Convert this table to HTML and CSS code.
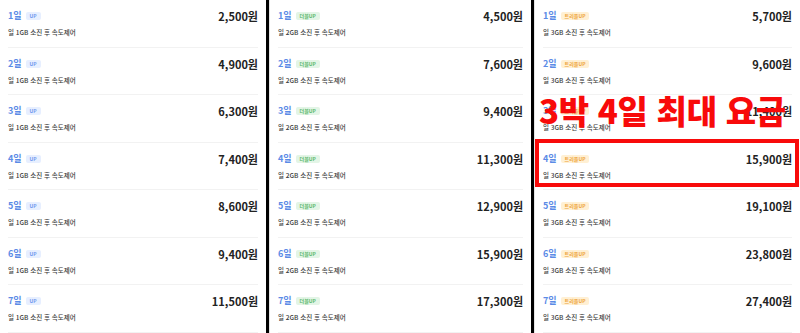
FILE: index.html
```html
<!DOCTYPE html>
<html lang="ko">
<head>
<meta charset="utf-8">
<title>요금표</title>
<link rel="stylesheet" href="styles.css">
</head>
<body>
<div class="page">
  <div class="col col-a">
    <div class="row"><div class="info"><div class="head"><span class="day">1일</span><span class="badge up">UP</span></div><div class="desc">일 1GB 소진 후 속도제어</div></div><div class="price">2,500원</div></div>
    <div class="row"><div class="info"><div class="head"><span class="day">2일</span><span class="badge up">UP</span></div><div class="desc">일 1GB 소진 후 속도제어</div></div><div class="price">4,900원</div></div>
    <div class="row"><div class="info"><div class="head"><span class="day">3일</span><span class="badge up">UP</span></div><div class="desc">일 1GB 소진 후 속도제어</div></div><div class="price">6,300원</div></div>
    <div class="row"><div class="info"><div class="head"><span class="day">4일</span><span class="badge up">UP</span></div><div class="desc">일 1GB 소진 후 속도제어</div></div><div class="price">7,400원</div></div>
    <div class="row"><div class="info"><div class="head"><span class="day">5일</span><span class="badge up">UP</span></div><div class="desc">일 1GB 소진 후 속도제어</div></div><div class="price">8,600원</div></div>
    <div class="row"><div class="info"><div class="head"><span class="day">6일</span><span class="badge up">UP</span></div><div class="desc">일 1GB 소진 후 속도제어</div></div><div class="price">9,400원</div></div>
    <div class="row"><div class="info"><div class="head"><span class="day">7일</span><span class="badge up">UP</span></div><div class="desc">일 1GB 소진 후 속도제어</div></div><div class="price">11,500원</div></div>
  </div>
  <div class="sep"></div>
  <div class="col col-b">
    <div class="row"><div class="info"><div class="head"><span class="day">1일</span><span class="badge dbl">더블UP</span></div><div class="desc">일 2GB 소진 후 속도제어</div></div><div class="price">4,500원</div></div>
    <div class="row"><div class="info"><div class="head"><span class="day">2일</span><span class="badge dbl">더블UP</span></div><div class="desc">일 2GB 소진 후 속도제어</div></div><div class="price">7,600원</div></div>
    <div class="row"><div class="info"><div class="head"><span class="day">3일</span><span class="badge dbl">더블UP</span></div><div class="desc">일 2GB 소진 후 속도제어</div></div><div class="price">9,400원</div></div>
    <div class="row"><div class="info"><div class="head"><span class="day">4일</span><span class="badge dbl">더블UP</span></div><div class="desc">일 2GB 소진 후 속도제어</div></div><div class="price">11,300원</div></div>
    <div class="row"><div class="info"><div class="head"><span class="day">5일</span><span class="badge dbl">더블UP</span></div><div class="desc">일 2GB 소진 후 속도제어</div></div><div class="price">12,900원</div></div>
    <div class="row"><div class="info"><div class="head"><span class="day">6일</span><span class="badge dbl">더블UP</span></div><div class="desc">일 2GB 소진 후 속도제어</div></div><div class="price">15,900원</div></div>
    <div class="row"><div class="info"><div class="head"><span class="day">7일</span><span class="badge dbl">더블UP</span></div><div class="desc">일 2GB 소진 후 속도제어</div></div><div class="price">17,300원</div></div>
  </div>
  <div class="sep"></div>
  <div class="col col-c">
    <div class="row"><div class="info"><div class="head"><span class="day">1일</span><span class="badge tri">트리플UP</span></div><div class="desc">일 3GB 소진 후 속도제어</div></div><div class="price">5,700원</div></div>
    <div class="row"><div class="info"><div class="head"><span class="day">2일</span><span class="badge tri">트리플UP</span></div><div class="desc">일 3GB 소진 후 속도제어</div></div><div class="price">9,600원</div></div>
    <div class="row"><div class="info"><div class="head"><span class="day">3일</span><span class="badge tri">트리플UP</span></div><div class="desc">일 3GB 소진 후 속도제어</div></div><div class="price">11,400원</div></div>
    <div class="row"><div class="info"><div class="head"><span class="day">4일</span><span class="badge tri">트리플UP</span></div><div class="desc">일 3GB 소진 후 속도제어</div></div><div class="price">15,900원</div></div>
    <div class="row"><div class="info"><div class="head"><span class="day">5일</span><span class="badge tri">트리플UP</span></div><div class="desc">일 3GB 소진 후 속도제어</div></div><div class="price">19,100원</div></div>
    <div class="row"><div class="info"><div class="head"><span class="day">6일</span><span class="badge tri">트리플UP</span></div><div class="desc">일 3GB 소진 후 속도제어</div></div><div class="price">23,800원</div></div>
    <div class="row"><div class="info"><div class="head"><span class="day">7일</span><span class="badge tri">트리플UP</span></div><div class="desc">일 3GB 소진 후 속도제어</div></div><div class="price">27,400원</div></div>
  </div>
  <div class="note">3박 4일 최대 요금</div>
  <div class="highlight"></div>
</div>
</body>
</html>
```
FILE: styles.css
```css
html, body {
  margin: 0;
  padding: 0;
  background: #ffffff;
}
body {
  font-family: "Noto Sans CJK KR", "Noto Sans", sans-serif;
  color: #222222;
}
.page {
  position: relative;
  display: flex;
  width: 800px;
  height: 333px;
  overflow: hidden;
  background: #ffffff;
}
.col {
  box-sizing: border-box;
  display: flex;
  flex-direction: column;
}
.col-a {
  width: 266px;
}
.col-b {
  width: 262px;
  border-left: 1px solid #e4e4e4;
}
.col-c {
  flex: 1;
  border-left: 1px solid #e4e4e4;
}
.sep {
  width: 3px;
  background: #000000;
}
.row {
  box-sizing: border-box;
  height: 47.5px;
  flex: none;
  margin: 0 8px;
  padding-top: 11px;
  display: flex;
  justify-content: space-between;
  align-items: flex-start;
  border-bottom: 1px solid #f2f2f2;
}
.head {
  display: flex;
  align-items: center;
  gap: 4px;
  height: 10px;
}
.day {
  font-size: 9px;
  line-height: 10px;
  font-weight: 700;
  color: #5b8be6;
}
.badge {
  display: flex;
  align-items: center;
  height: 8px;
  padding: 0 4px;
  border-radius: 2px;
  font-size: 5px;
  line-height: 8px;
  font-weight: 700;
}
.badge.up {
  background: #e7efff;
  color: #6f98ee;
}
.badge.dbl {
  background: #e3f5e6;
  color: #5bb86b;
}
.badge.tri {
  background: #fff0d4;
  color: #eea43a;
}
.desc {
  margin-top: 7px;
  font-size: 6.5px;
  line-height: 8px;
  font-weight: 500;
  color: #3a3a3a;
}
.price {
  margin-top: -1px;
  font-size: 11px;
  line-height: 12px;
  font-weight: 700;
  color: #222222;
}
.col-c .price {
  font-weight: 600;
}
.note {
  position: absolute;
  left: 539px;
  top: 90px;
  font-size: 33px;
  line-height: 40px;
  font-weight: 900;
  letter-spacing: -0.3px;
  color: #f80a0a;
  white-space: nowrap;
}
.highlight {
  position: absolute;
  left: 535px;
  top: 139px;
  width: 264px;
  height: 48px;
  box-sizing: border-box;
  border: 4px solid #f80a0a;
}
```
